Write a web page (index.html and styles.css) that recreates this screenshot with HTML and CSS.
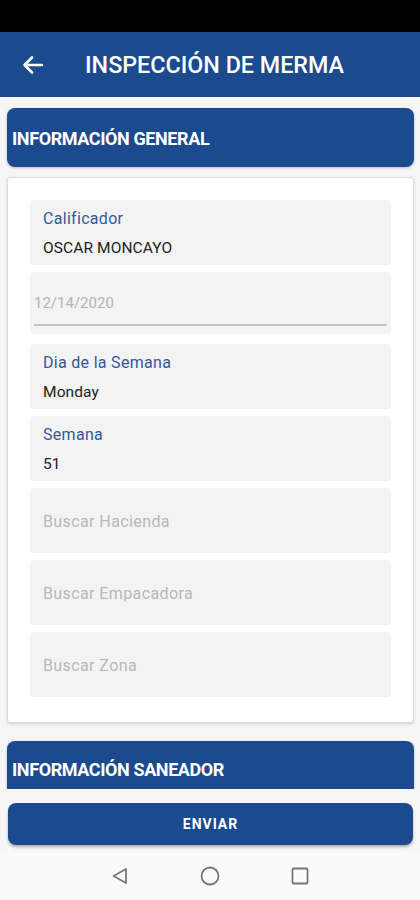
FILE: index.html
```html
<!DOCTYPE html>
<html lang="es">
<head>
<meta charset="utf-8">
<link rel="stylesheet" href="styles.css">
</head>
<body>
<div class="screen">
  <div class="statusbar"></div>
  <header class="appbar">
    <svg class="back" width="22" height="20" viewBox="0 0 22 20"><path d="M20 10H3M10 2.5 2.5 10 10 17.5" fill="none" stroke="#fff" stroke-width="2.6" stroke-linecap="round" stroke-linejoin="round"/></svg>
    <h1 class="title">INSPECCIÓN DE MERMA</h1>
  </header>
  <main class="content">
    <div class="section-head">INFORMACIÓN GENERAL</div>
    <div class="card">
      <div class="field">
        <div class="label">Calificador</div>
        <div class="value">OSCAR MONCAYO</div>
      </div>
      <div class="field date">
        <div class="date-text">12/14/2020</div>
        <div class="underline"></div>
      </div>
      <div class="field">
        <div class="label">Dia de la Semana</div>
        <div class="value">Monday</div>
      </div>
      <div class="field">
        <div class="label">Semana</div>
        <div class="value">51</div>
      </div>
      <div class="field placeholder">Buscar Hacienda</div>
      <div class="field placeholder">Buscar Empacadora</div>
      <div class="field placeholder">Buscar Zona</div>
    </div>
    <div class="section-head second">INFORMACIÓN SANEADOR</div>
  </main>
  <div class="footer">
    <button class="send">ENVIAR</button>
  </div>
  <nav class="navbar">
    <svg width="18" height="18" viewBox="0 0 18 18"><path d="M15 2 2.5 9 15 16Z" fill="none" stroke="#777" stroke-width="1.8" stroke-linejoin="round"/></svg>
    <svg width="20" height="20" viewBox="0 0 20 20"><circle cx="10" cy="10" r="8.5" fill="none" stroke="#777" stroke-width="1.8"/></svg>
    <svg width="18" height="18" viewBox="0 0 18 18"><rect x="1.5" y="1.5" width="15" height="15" rx="1" fill="none" stroke="#777" stroke-width="1.8"/></svg>
  </nav>
</div>
</body>
</html>
```

FILE: styles.css
```css
* { box-sizing: border-box; }
html, body { margin: 0; padding: 0; }
body { font-family: Roboto, "Noto Sans", sans-serif; background: #f6f6f6; }
.screen { width: 420px; height: 900px; display: flex; flex-direction: column; overflow: hidden; background: #f6f6f6; }
.statusbar { height: 32px; background: #000; flex: none; }
.appbar { height: 65px; flex: none; background: #1c4a8e; display: flex; align-items: center; padding-left: 22px; }
.back { flex: none; }
.title { margin: 1px 0 0 41px; color: #fff; font-size: 23.3px; font-weight: 500; letter-spacing: 0; }
.content { flex: 1; overflow: hidden; padding: 11px 6px 0 7px; display: flex; flex-direction: column; }
.section-head { flex: none; height: 59px; background: #1c4a8e; border-radius: 8px; color: #fff; font-weight: 700; font-size: 18px; letter-spacing: -0.4px; display: flex; align-items: center; padding: 2px 0 0 5px; box-shadow: 0 1px 3px rgba(0,0,0,0.25); }
.section-head.second { margin-top: 18px; height: 55px; border-radius: 8px 8px 0 0; }
.card { flex: none; margin-top: 10px; background: #fff; border: 1px solid #dcdcdc; border-radius: 3px; box-shadow: 0 1px 3px rgba(0,0,0,0.15); padding: 22px 22px 25px 22px; display: flex; flex-direction: column; gap: 7px; }
.field { height: 65px; background: #f3f3f3; border-radius: 4px; padding: 10px 13px 0; }
.label { font-size: 16px; line-height: 18px; letter-spacing: 0.3px; color: #34599b; }
.value { margin-top: 11px; font-size: 15.5px; line-height: 18px; letter-spacing: 0.1px; color: #222; }
.field.date { height: 62px; padding: 22px 4px 0; margin-bottom: 3px; }
.date-text { font-size: 15px; line-height: 18px; color: #b4b4b4; }
.underline { margin-top: 12px; height: 2px; background: #c4c4c4; }
.field.placeholder { padding-top: 2px; display: flex; align-items: center; font-size: 16px; letter-spacing: 0.4px; color: #b8b8b8; }
.footer { flex: none; height: 63px; padding: 14px 7px 0 8px; }
.send { width: 100%; height: 42px; border: none; border-radius: 8px; background: #1c4a8e; color: #fff; font-family: Roboto, sans-serif; font-weight: 700; font-size: 14px; letter-spacing: 1px; box-shadow: 0 2px 3px rgba(0,0,0,0.3); }
.navbar { flex: none; height: 48px; background: #fafafa; display: flex; align-items: center; justify-content: center; gap: 71px; padding-bottom: 0; }
```
